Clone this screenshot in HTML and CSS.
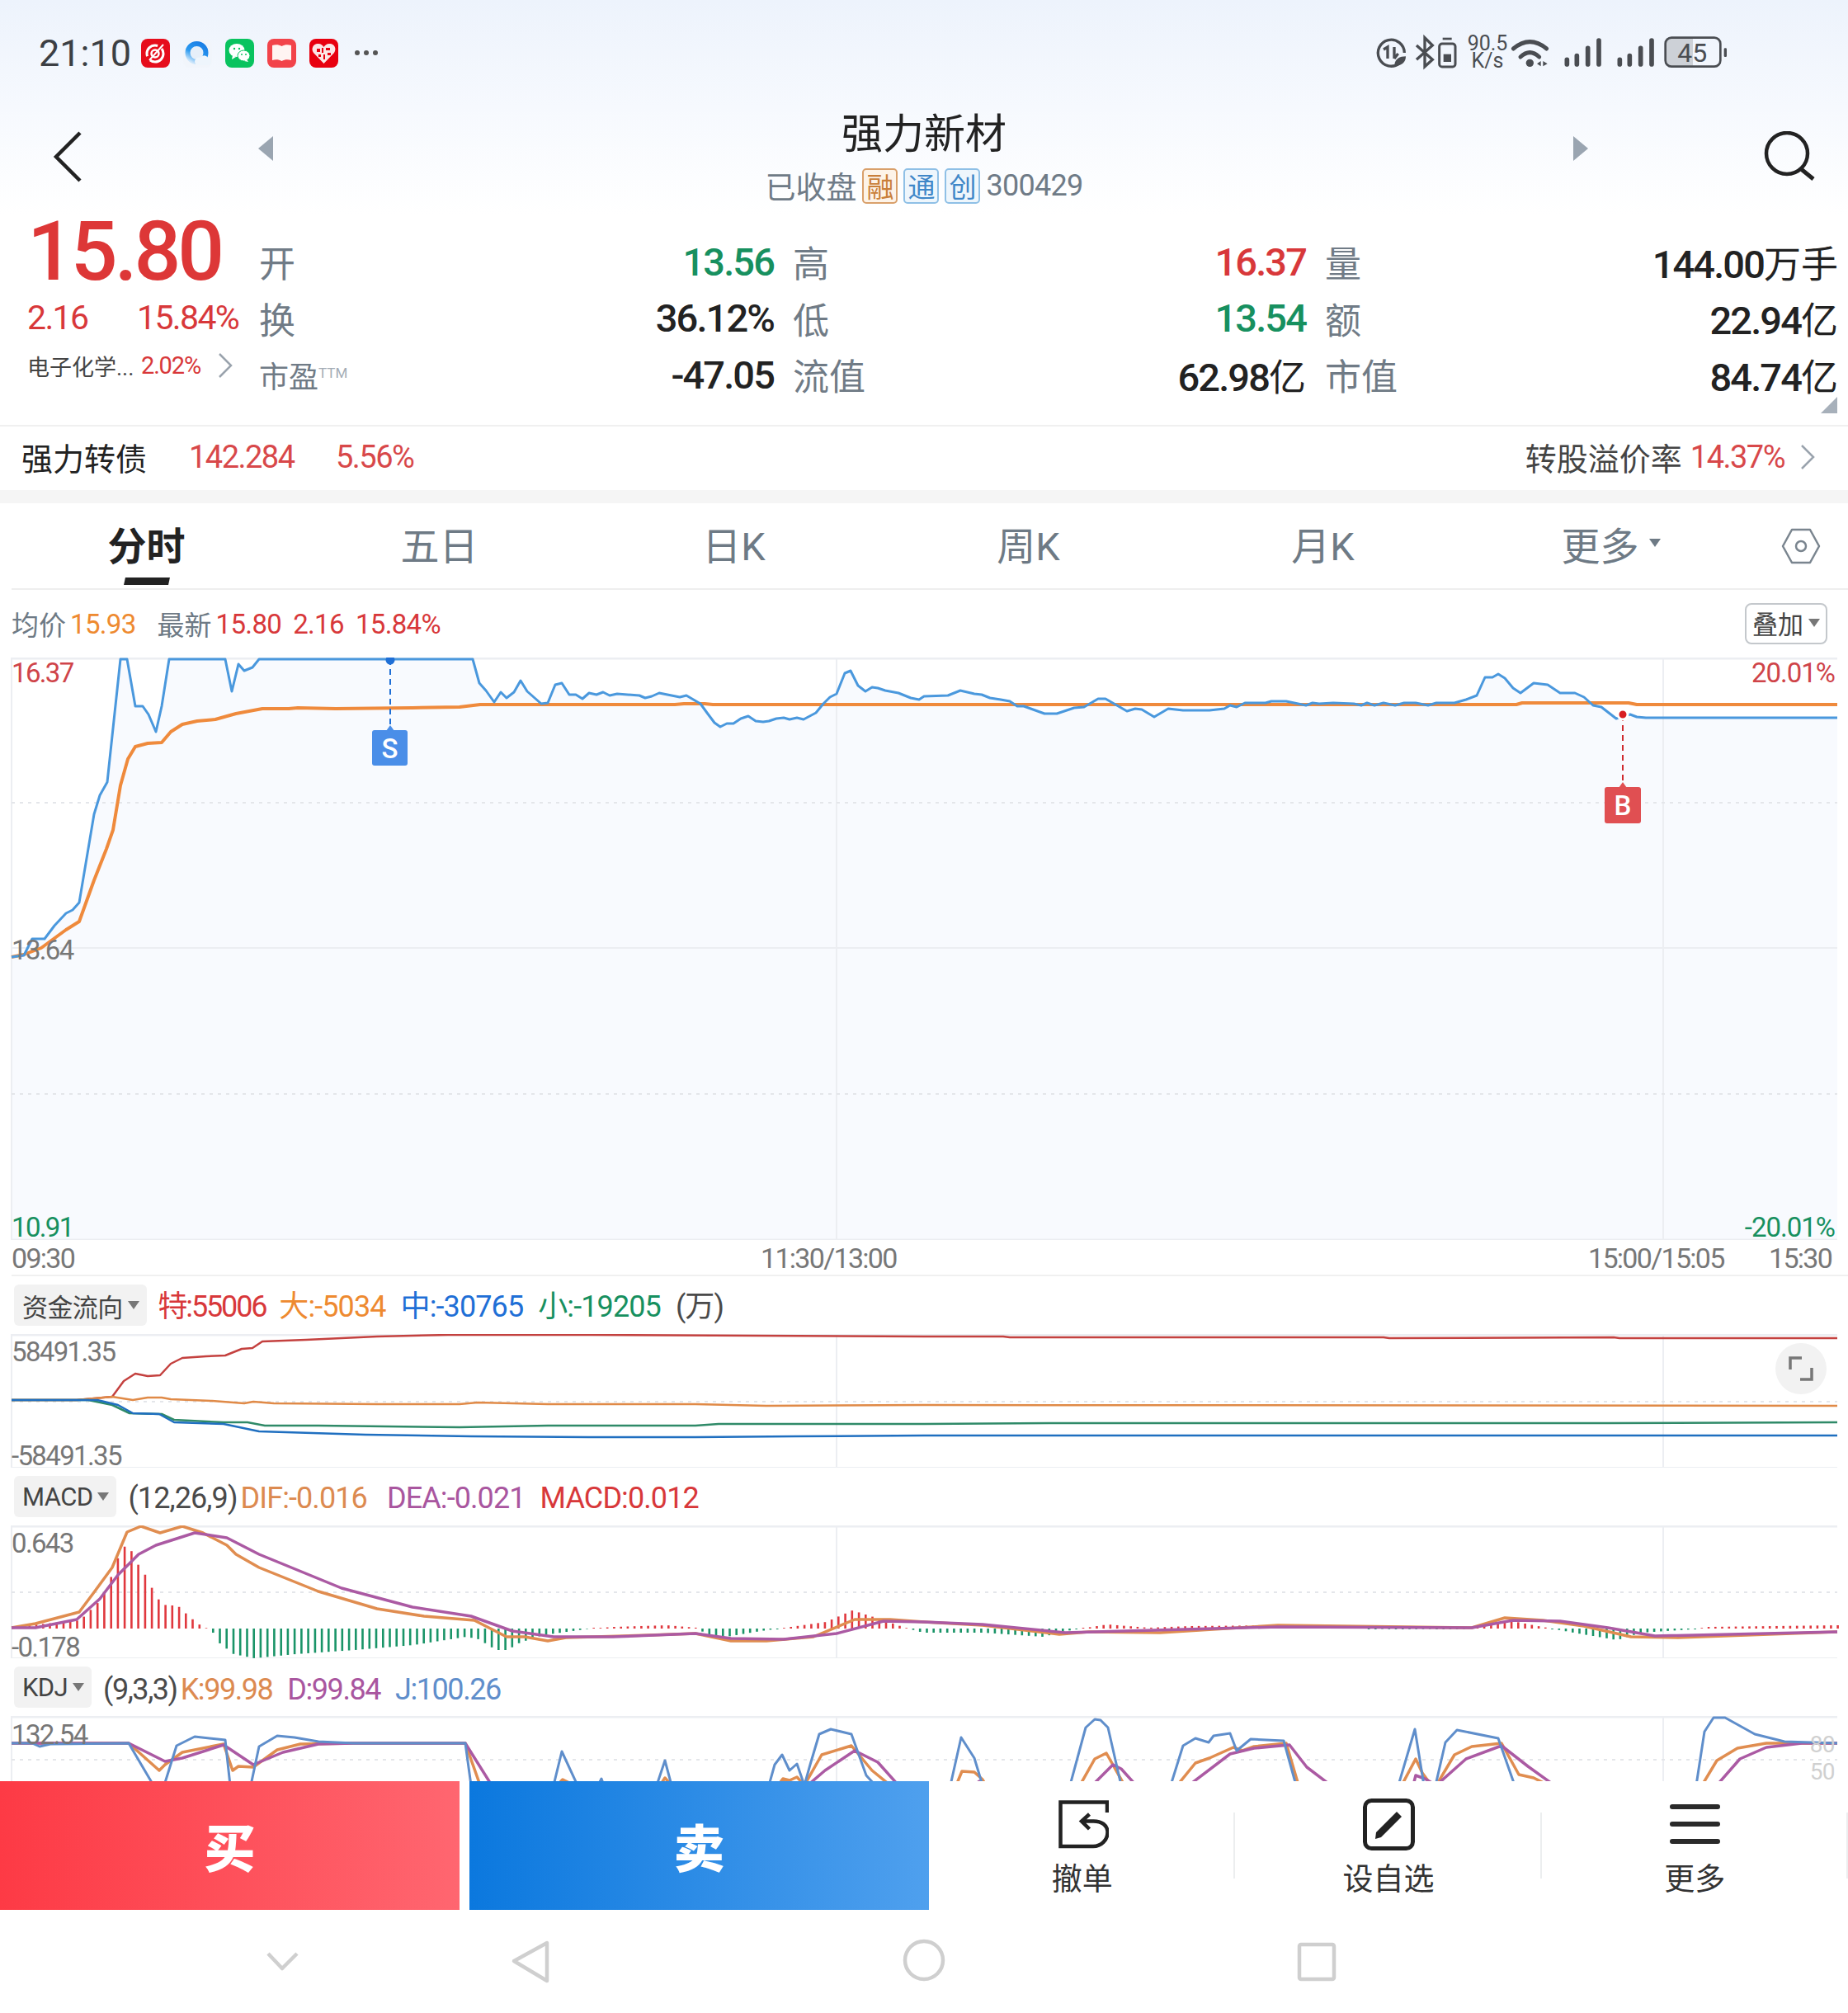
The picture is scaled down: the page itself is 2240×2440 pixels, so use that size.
FILE: index.html
```html
<!DOCTYPE html>
<html>
<head>
	<meta charset="utf-8">
	<title>强力新材</title>
	<link rel="stylesheet" href="styles.css">
</head>
<body>
<div class="screen">
	<div class="top">
		<div class="statusbar">
			<span class="clock">21:10</span>
			<div class="apps">
				<svg class="app" viewBox="0 0 35 35"><rect width="35" height="35" rx="8" fill="#e60d1c"/><circle cx="17" cy="18" r="10" fill="none" stroke="#fff" stroke-width="3" stroke-dasharray="22 6"/><circle cx="17" cy="18" r="4.5" fill="none" stroke="#fff" stroke-width="2.5"/><path d="M10 26L27 7" stroke="#fff" stroke-width="2"/></svg>
				<svg class="app" viewBox="0 0 35 35"><defs><linearGradient id="ring" x1="0.8" y1="0" x2="0.2" y2="1"><stop offset="0" stop-color="#1a7fe6"/><stop offset="0.6" stop-color="#2b9af0"/><stop offset="1" stop-color="#cde6fb"/></linearGradient></defs><rect width="35" height="35" rx="8" fill="#f1f5fb"/><circle cx="16.500" cy="17" r="11" fill="#e6eff9" stroke="url(#ring)" stroke-width="6"/><path d="M17 32H29A4.500 4.500 0 0 0 30 23A5 5 0 0 0 21 23A4.500 4.500 0 0 0 17 32Z" fill="#eef5fc"/></svg>
				<svg class="app" viewBox="0 0 35 35"><rect width="35" height="35" rx="8" fill="#09c35f"/><ellipse cx="14" cy="14" rx="9.5" ry="8" fill="#fff"/><path d="M9 20l-1 5 5-3z" fill="#fff"/><ellipse cx="22.500" cy="20.500" rx="7.500" ry="6.500" fill="#fff" stroke="#09c35f"/><path d="M26 25l2 3-5-1z" fill="#fff"/><circle cx="11" cy="12" r="1.200" fill="#09c35f"/><circle cx="17" cy="12" r="1.200" fill="#09c35f"/><circle cx="20" cy="19" r="1" fill="#09c35f"/><circle cx="25" cy="19" r="1" fill="#09c35f"/></svg>
				<svg class="app" viewBox="0 0 35 35"><rect width="35" height="35" rx="8" fill="#f2434a"/><path d="M6 8c4-1 8-1 11.500 1C21 7 25 7 29 8v18c-4-1-8-1-11.500 1C14 25 10 25 6 26z" fill="#fff4f2"/></svg>
				<svg class="app" viewBox="0 0 35 35"><rect width="35" height="35" rx="8" fill="#e8000f"/><path d="M17.500 30L5 17C1 11 6 5 11 6c3 0 5 2 6.500 4C19 8 21 6 24 6c5-1 10 5 6 11z" fill="#fbe6e6"/><path d="M9 12h4v4H9zM15 11h2v6h-2zM20 11h5v3h-5zM11 19h3v3h-3zM17 19h2v6h-2zM22 17h4v3h-4z" fill="#e8000f"/></svg>
				<svg class="more-dots" viewBox="0 0 30 8"><circle cx="4" cy="4" r="3" fill="#555"/><circle cx="15" cy="4" r="3" fill="#555"/><circle cx="26" cy="4" r="3" fill="#555"/></svg>
			</div>
			<div class="sys-wrap">
				<svg class="sys-icons" viewBox="0 0 1350 210">
					<g fill="none" stroke="#4a4d52" stroke-width="10">
						<path d="M118 143A48 48 0 1 1 136 105"/>
						<path d="M60 93L75 84V126M99 84V126M99 126L113 108"/>
					</g>
					<path d="M100 152C100 126 120 118 141 118C141 140 125 154 100 152Z" fill="#4a4d52"/>
					<path d="M180 78L238 130L210 155V50L238 78L180 130" fill="none" stroke="#4a4d52" stroke-width="10"/>
					<rect x="263" y="72" width="58" height="84" rx="10" fill="none" stroke="#4a4d52" stroke-width="9"/>
					<path d="M275 54H308" stroke="#4a4d52" stroke-width="8"/>
					<rect x="278" y="110" width="28" height="28" fill="#4a4d52"/>
					<g fill="none" stroke="#4a4d52" stroke-width="15" stroke-linecap="round">
						<path d="M532 90Q592 40 653 90"/>
						<path d="M558 120Q592 88 626 120"/>
					</g>
					<circle cx="592" cy="142" r="14" fill="#4a4d52"/>
					<path d="M618 145L632 135V154ZM640 135L656 145L640 154Z" fill="#4a4d52"/>
					<g stroke="#4a4d52" stroke-width="17" stroke-linecap="round">
						<path d="M727 130V147M763 116V147M803 88V147M843 60V147"/>
						<path d="M919 130V147M955 116V147M995 88V147M1035 60V147"/>
					</g>
					<path d="M1104 54H1185V152H1104A16 16 0 0 1 1088 136V70A16 16 0 0 1 1104 54Z" fill="#cdd1d7"/>
					<rect x="1085" y="50" width="200" height="105" rx="22" fill="none" stroke="#4a4d52" stroke-width="8"/>
					<text class="sys-batt" x="1183" y="137">45</text>
					<rect x="1298" y="88" width="10" height="32" rx="4" fill="#4a4d52"/>
				</svg>
				<div class="sys-net"><div>90.5</div><div>K/s</div></div>
			</div>
		</div>

		<div class="header">
			<div class="header-side">
				<svg class="back-icon" viewBox="0 0 40 64"><path d="M35 3L6 32L35 61" fill="none" stroke="#222" stroke-width="4.500"/></svg>
				<span class="arrow arrow-left"></span>
			</div>
			<div class="header-title">
				<div class="stock-name">强力新材</div>
				<div class="stock-sub">
					<span>已收盘</span>
					<span class="tag tag-orange">融</span>
					<span class="tag tag-blue">通</span>
					<span class="tag tag-blue">创</span>
					<span class="stock-code">300429</span>
				</div>
			</div>
			<div class="header-side header-right">
				<span class="arrow arrow-right"></span>
				<svg class="search-icon" viewBox="0 0 64 60"><circle cx="28" cy="27" r="25" fill="none" stroke="#222" stroke-width="4.500"/><path d="M44 45L60 58" stroke="#222" stroke-width="5"/></svg>
			</div>
		</div>

		<div class="quote">
			<div class="quote-left">
				<div class="price">15.80</div>
				<div class="change"><span class="change-abs">2.16</span><span>15.84%</span></div>
				<div class="sector">
					<span class="sector-name">电子化学...</span>
					<span class="sector-pct">2.02%</span>
					<svg class="chevron" viewBox="0 0 18 32"><path d="M2 2L16 16L2 30" fill="none" stroke="#9aa3ad" stroke-width="2.500"/></svg>
				</div>
			</div>
			<div class="cell"><span class="cell-label">开</span><span class="cell-value green">13.56</span></div>
			<div class="cell"><span class="cell-label">高</span><span class="cell-value red">16.37</span></div>
			<div class="cell"><span class="cell-label">量</span><span class="cell-value">144.00<span class="unit">万手</span></span></div>
			<div class="cell"><span class="cell-label">换</span><span class="cell-value">36.12%</span></div>
			<div class="cell"><span class="cell-label">低</span><span class="cell-value green">13.54</span></div>
			<div class="cell"><span class="cell-label">额</span><span class="cell-value">22.94<span class="unit">亿</span></span></div>
			<div class="cell"><span class="cell-label cell-label-small">市盈<sup>TTM</sup></span><span class="cell-value">-47.05</span></div>
			<div class="cell"><span class="cell-label">流值</span><span class="cell-value">62.98<span class="unit">亿</span></span></div>
			<div class="cell"><span class="cell-label">市值</span><span class="cell-value">84.74<span class="unit">亿</span></span></div>
			<span class="corner"></span>
		</div>
	</div>

	<div class="bond">
		<span class="bond-name">强力转债</span>
		<span class="bond-num bond-price">142.284</span>
		<span class="bond-num bond-pct">5.56%</span>
		<span class="bond-right">转股溢价率</span>
		<span class="bond-num bond-premium">14.37%</span>
		<svg class="chevron chevron-bond" viewBox="0 0 18 32"><path d="M2 2L16 16L2 30" fill="none" stroke="#9aa3ad" stroke-width="2.500"/></svg>
	</div>
	<div class="band"></div>

	<div class="tabs">
		<div class="tab tab-active">分时</div>
		<div class="tab">五日</div>
		<div class="tab">日K</div>
		<div class="tab">周K</div>
		<div class="tab">月K</div>
		<div class="tab tab-more">更多<span class="caret caret-tab"></span></div>
		<svg class="settings-icon" viewBox="0 0 48 44"><path d="M13 2H35L46 22L35 42H13L2 22Z" fill="none" stroke="#7a858f" stroke-width="2.500" stroke-linejoin="round"/><circle cx="24" cy="22" r="6" fill="none" stroke="#7a858f" stroke-width="2.500"/></svg>
	</div>

	<div class="legend">
		<span class="legend-key">均价</span><span class="legend-num orange">15.93</span>
		<span class="legend-key legend-gap">最新</span><span class="legend-num red">15.80</span>
		<span class="legend-num red legend-num-gap">2.16</span>
		<span class="legend-num red legend-num-gap">15.84%</span>
		<span class="overlay-btn">叠加<span class="caret"></span></span>
	</div>

	<div class="plot plot-main">
		<svg id="plot-main" class="plot-svg" viewBox="0 797 2240 706">
			<g id="main-lines"></g>
			<path d="M473 799V885" stroke="#1f6fd6" stroke-width="2" stroke-dasharray="7 5"/>
			<circle cx="473" cy="800" r="5.500" fill="#1f6fd6"/>
			<path d="M473 879L478 886H468Z" fill="#4a8ee8"/>
			<rect x="451" y="885" width="43" height="43" rx="3" fill="#4a8ee8"/>
			<text class="marker-text" x="472.500" y="919">S</text>
			<path d="M1967 867V954" stroke="#cf2a2e" stroke-width="2" stroke-dasharray="7 5"/>
			<circle cx="1967" cy="866" r="6" fill="#d81e22" stroke="#fff" stroke-width="3"/>
			<path d="M1967 948L1972 955H1962Z" fill="#e04f52"/>
			<rect x="1945" y="954" width="44" height="44" rx="3" fill="#e04f52"/>
			<text class="marker-text" x="1967" y="988">B</text>
		</svg>
		<span class="lbl lbl-left lbl-top lbl-red">16.37</span>
		<span class="lbl lbl-left lbl-mid">13.64</span>
		<span class="lbl lbl-left lbl-bot lbl-green">10.91</span>
		<span class="lbl lbl-right lbl-top lbl-red">20.01%</span>
		<span class="lbl lbl-right lbl-bot lbl-green">-20.01%</span>
	</div>

	<div class="time-axis">
		<span class="time-item time-open">09:30</span>
		<span class="time-item time-noon">11:30/13:00</span>
		<span class="time-item time-close">15:00/15:05</span>
		<span class="time-item time-after">15:30</span>
	</div>

	<div class="ind-row ind-row-flow">
		<span class="chip">资金流向<span class="caret"></span></span>
		<span class="ind ind-first ind-special red">特:55006</span>
		<span class="ind orange">大:-5034</span>
		<span class="ind blue">中:-30765</span>
		<span class="ind green">小:-19205</span>
		<span class="ind ind-muted">(万)</span>
	</div>
	<div class="plot plot-flow">
		<svg id="plot-flow" class="plot-svg" viewBox="0 1617 2240 162"></svg>
		<span class="lbl lbl-left lbl-top">58491.35</span>
		<span class="lbl lbl-left lbl-bot">-58491.35</span>
		<svg class="expand-icon" viewBox="0 0 62 62"><circle cx="31" cy="31" r="31" fill="#f2f2f2"/><path d="M18 32V18H32M44 30V44H30" fill="none" stroke="#777" stroke-width="3.500"/></svg>
	</div>

	<div class="ind-row ind-row-macd">
		<span class="chip">MACD<span class="caret"></span></span>
		<span class="ind ind-first ind-muted">(12,26,9)</span>
		<span class="ind ind-tight dif">DIF:-0.016</span>
		<span class="ind purple">DEA:-0.021</span>
		<span class="ind red">MACD:0.012</span>
	</div>
	<div class="plot plot-macd">
		<svg id="plot-macd" class="plot-svg" viewBox="0 1850 2240 161"></svg>
		<span class="lbl lbl-left lbl-top">0.643</span>
		<span class="lbl lbl-left lbl-bot">-0.178</span>
	</div>

	<div class="ind-row ind-row-kdj">
		<span class="chip">KDJ<span class="caret"></span></span>
		<span class="ind ind-first ind-muted">(9,3,3)</span>
		<span class="ind ind-tight dif">K:99.98</span>
		<span class="ind purple">D:99.84</span>
		<span class="ind kdj-j">J:100.26</span>
	</div>
	<div class="plot plot-kdj">
		<svg id="plot-kdj" class="plot-svg" viewBox="0 2081 2240 79"></svg>
		<span class="lbl lbl-left lbl-top">132.54</span>
		<span class="lbl lbl-right lbl-80">80</span>
		<span class="lbl lbl-right lbl-50">50</span>
	</div>

	<div class="actions">
		<div class="trade buy">买</div>
		<div class="trade sell">卖</div>
		<div class="action">
			<svg class="action-icon" viewBox="0 0 64 64"><path d="M62 18V5.500H5.500V59H45C55 59 62.500 51 62.500 42C62.500 33 55 28.500 45.500 28.500H31M40.500 20L31 28.500L40.500 38" fill="none" stroke="#222" stroke-width="4.500"/></svg>
			<span>撤单</span>
		</div>
		<div class="action">
			<svg class="action-icon" viewBox="0 0 64 64"><rect x="3.500" y="3.500" width="58" height="58" rx="8" fill="none" stroke="#222" stroke-width="5"/><path d="M17 42L42 17L48 23L23 48L16 50Z" fill="#222"/></svg>
			<span>设自选</span>
		</div>
		<div class="action">
			<svg class="action-icon" viewBox="0 0 64 64"><path d="M5 11H60M5 32H60M5 53H60" stroke="#2a2a2a" stroke-width="6" stroke-linecap="round"/></svg>
			<span>更多</span>
		</div>
	</div>

	<svg class="navbar" viewBox="0 2316 2240 124">
		<g fill="none" stroke="#cfcfcf" stroke-width="4.500" stroke-linejoin="round">
			<path d="M325 2369L342 2387L360 2369"/>
			<path d="M663 2356V2402L623 2378Z"/>
			<circle cx="1120" cy="2377" r="23"/>
			<rect x="1575" y="2358" width="42" height="42" rx="2"/>
		</g>
	</svg>
</div>
<script src="chart.js"></script>
</body>
</html>
```

FILE: styles.css
```css
* {
	box-sizing: border-box;
}
body {
	margin: 0;
	background-color: #fff;
	font-family: Roboto, "Noto Sans CJK SC", sans-serif;
	color: #222;
}
.screen {
	width: 2240px;
	height: 2440px;
	overflow: hidden;
	background-color: #fff;
}
.red { color: #d8383a; }
.green { color: #17905f; }
.orange { color: #ee8a30; }
.blue { color: #1f6fd6; }
.purple { color: #a9569f; }
.dif { color: #dc8a50; }
.kdj-j { color: #5f8ecb; }

/* top block with the pale gradient */
.top {
	position: relative;
	height: 515px;
	background: linear-gradient(#edf3fc 0, #f6f9fe 130px, #fff 260px);
}
.statusbar {
	display: flex;
	align-items: center;
	height: 128px;
	padding-left: 47px;
	padding-right: 133px;
}
.clock {
	width: 124px;
	font-size: 45px;
	color: #3c3f44;
}
.apps {
	display: flex;
	align-items: center;
	gap: 16px;
}
.app {
	width: 35px;
	height: 35px;
}
.more-dots {
	width: 30px;
	height: 8px;
	margin-left: 3px;
}
.sys-wrap {
	position: relative;
	margin-left: auto;
}
.sys-icons {
	display: block;
	width: 450px;
	height: 70px;
}
.sys-net {
	position: absolute;
	left: 119px;
	top: 13px;
	width: 54px;
	font-size: 25px;
	line-height: 21px;
	text-align: center;
	color: #4a4d52;
}
.sys-batt {
	font-size: 96px;
	text-anchor: middle;
	fill: #4a4d52;
}

.header {
	display: grid;
	grid-template-columns: 1fr auto 1fr;
	height: 134px;
}
.header-side {
	display: flex;
	align-items: flex-start;
	padding-left: 62px;
}
.header-right {
	justify-content: flex-end;
	padding-left: 0;
	padding-right: 38px;
}
.back-icon {
	width: 40px;
	height: 64px;
	margin-top: 30px;
}
.arrow {
	width: 0;
	height: 0;
	margin-top: 37px;
	border-top: 15px solid transparent;
	border-bottom: 15px solid transparent;
}
.arrow-left {
	margin-left: 211px;
	border-right: 18px solid #9aa5b1;
}
.arrow-right {
	margin-right: 213px;
	border-left: 18px solid #9aa5b1;
}
.search-icon {
	width: 64px;
	height: 60px;
	margin-top: 31px;
}
.header-title {
	display: flex;
	flex-direction: column;
	align-items: center;
}
.stock-name {
	height: 70px;
	font-size: 50px;
	line-height: 70px;
	color: #222;
}
.stock-sub {
	display: flex;
	align-items: center;
	gap: 7px;
	height: 50px;
	margin-top: 2px;
	font-size: 37px;
	color: #6f7b87;
}
.tag {
	display: flex;
	align-items: center;
	justify-content: center;
	width: 43px;
	height: 43px;
	border-radius: 5px;
	font-size: 33px;
}
.tag-orange {
	border: 2px solid #d9a06b;
	background-color: #fdf3e8;
	color: #c97f3a;
}
.tag-blue {
	border: 2px solid #8fc0e6;
	background-color: #eef6fc;
	color: #3f87c8;
}
.stock-code {
	font-size: 36px;
	letter-spacing: -0.02em;
}

.quote {
	position: relative;
	display: grid;
	grid-template-columns: 258px 624px 622px 622px;
	grid-auto-rows: 68.5px;
	column-gap: 23px;
	padding: 21px 0 0 33px;
}
.quote-left {
	grid-row: 1 / 4;
	margin-top: -28px;
	margin-right: -23px;
}
.price {
	height: 100px;
	font-size: 100px;
	font-weight: 500;
	line-height: 100px;
	letter-spacing: -0.04em;
	color: #dd3737;
}
.change {
	display: flex;
	height: 66px;
	margin-top: -3px;
	font-size: 41px;
	line-height: 66px;
	letter-spacing: -0.04em;
	color: #d8383a;
}
.change-abs {
	width: 133px;
}
.sector {
	display: flex;
	align-items: center;
	height: 46px;
	margin-top: 2px;
	font-size: 27px;
	color: #444;
}
.sector-name {
	width: 138px;
	white-space: nowrap;
}
.sector-pct {
	width: 93px;
	font-size: 29px;
	letter-spacing: -0.04em;
	color: #d8383a;
}
.chevron {
	width: 18px;
	height: 32px;
}
.cell {
	display: flex;
	align-items: center;
	justify-content: space-between;
}
.cell-label {
	font-size: 44px;
	color: #707b86;
}
.cell-label-small {
	font-size: 36px;
}
.cell-label sup {
	position: relative;
	top: -12px;
	margin-left: 0;
	font-size: 17px;
	line-height: 0;
	vertical-align: baseline;
	color: #a3acb5;
}
.cell-value {
	font-size: 47px;
	font-weight: 500;
	letter-spacing: -0.04em;
}
.unit {
	font-size: 45px;
	font-weight: 400;
	letter-spacing: 0;
}
.corner {
	position: absolute;
	right: 13px;
	bottom: -12px;
	border-left: 20px solid transparent;
	border-bottom: 20px solid #a7b0ba;
}

.bond {
	display: flex;
	align-items: center;
	height: 79px;
	padding-left: 26px;
	padding-bottom: 4px;
	border-top: 2px solid #f0f0f0;
}
.bond-name {
	width: 203px;
	font-size: 38px;
	color: #222;
}
.bond-num {
	font-size: 38px;
	letter-spacing: -0.04em;
	color: #d8484a;
}
.bond-price {
	width: 178px;
}
.bond-right {
	margin-left: auto;
	font-size: 38px;
	color: #444;
}
.bond-premium {
	margin-left: 10px;
}
.chevron-bond {
	margin-left: 19px;
	margin-right: 40px;
}
.band {
	height: 16px;
	background-color: #f5f5f5;
}

.tabs {
	position: relative;
	display: grid;
	grid-template-columns: repeat(6, 357px);
	align-items: center;
	height: 105px;
	padding-bottom: 9px;
}
.tabs::after {
	content: "";
	position: absolute;
	left: 14px;
	right: 0;
	bottom: 0;
	height: 2px;
	background-color: #eee;
}
.tab {
	position: relative;
	left: -3px;
	display: flex;
	align-items: center;
	justify-content: center;
	font-size: 47px;
	color: #6e7a85;
}
.tab-active {
	left: -1px;
	font-weight: 700;
	color: #222;
}
.tab-active::after {
	content: "";
	position: absolute;
	left: 152px;
	top: 76px;
	width: 54px;
	height: 9px;
	background-color: #222;
	transform: skewX(-12deg);
}
.tab-more {
	left: -11px;
}
.settings-icon {
	position: absolute;
	left: 2159px;
	top: 30px;
	width: 48px;
	height: 44px;
}
.caret {
	display: inline-block;
	margin-left: 6px;
	border-left: 7px solid transparent;
	border-right: 7px solid transparent;
	border-top: 10px solid #777;
}
.caret-tab {
	margin-left: 12px;
	border-top-color: #6e7a85;
}

.legend {
	display: flex;
	align-items: center;
	height: 82px;
	padding-left: 14px;
	padding-right: 25px;
	font-size: 33px;
}
.legend-key {
	color: #6e7a85;
}
.legend-num {
	margin-left: 5px;
	letter-spacing: -0.02em;
}
.legend-gap {
	margin-left: 26px;
}
.legend-num-gap {
	margin-left: 14px;
}
.overlay-btn {
	display: flex;
	align-items: center;
	justify-content: center;
	width: 100px;
	height: 50px;
	margin-left: auto;
	padding-bottom: 3px;
	border: 2px solid #c4c8cc;
	border-radius: 8px;
	font-size: 31px;
	color: #444;
}

.plot {
	position: relative;
}
.plot-svg {
	position: absolute;
	left: 0;
	top: 0;
	display: block;
	width: 2240px;
	height: 100%;
}
.plot-main { height: 706px; }
.plot-flow { height: 162px; }
.plot-macd { height: 161px; }
.plot-kdj { height: 79px; }
.lbl {
	position: absolute;
	font-size: 33px;
	line-height: 40px;
	letter-spacing: -0.05em;
	color: #777;
}
.lbl-red { color: #cf4449; }
.lbl-green { color: #17905f; }
.lbl-left { left: 14px; }
.lbl-right {
	right: 16px;
	letter-spacing: -0.03em;
}
.plot-main .lbl-top { top: -1px; }
.plot-main .lbl-mid { top: 335px; }
.plot-main .lbl-bot { top: 671px; }
.plot-flow .lbl-top { top: 2px; }
.plot-flow .lbl-bot { top: 128px; }
.plot-macd .lbl-top { top: 2px; }
.plot-macd .lbl-bot { top: 128px; }
.plot-kdj .lbl-top { top: 3px; }
.lbl-80,
.lbl-50 {
	font-size: 28px;
	line-height: 24px;
	letter-spacing: -0.02em;
	color: #d0d0d0;
}
.lbl-80 { top: 23px; }
.lbl-50 { top: 56px; }
.marker-text {
	font-size: 33px;
	font-weight: 500;
	text-anchor: middle;
	fill: #fff;
}
.expand-icon {
	position: absolute;
	left: 2152px;
	top: 11px;
	width: 62px;
	height: 62px;
}

.time-axis {
	position: relative;
	height: 44px;
	border-bottom: 2px solid #f0f0f0;
	margin-left: 14px;
}
.time-item {
	position: absolute;
	top: 2px;
	font-size: 34px;
	line-height: 40px;
	letter-spacing: -0.05em;
	color: #777;
}
.time-open { left: 0; }
.time-noon { left: 908px; }
.time-close { left: 1911px; }
.time-after { left: 2130px; }

.ind-row {
	display: flex;
	align-items: center;
	height: 70px;
	padding-left: 17px;
	font-size: 36px;
	letter-spacing: -0.025em;
}
.ind-row-flow .ind { margin-bottom: 5px; }
.ind-row-macd .ind { margin-top: 3px; }
.ind-row-kdj .ind {
	margin-top: 6px;
	letter-spacing: -0.04em;
}
.ind-row-macd .purple { margin-left: 24px; }
.chip {
	display: flex;
	align-items: center;
	height: 50px;
	padding: 0 9px 0 10px;
	border-radius: 6px;
	background-color: #f2f2f2;
	font-size: 31px;
	letter-spacing: -0.02em;
	color: #444;
}
.ind {
	margin-left: 18px;
}
.ind-first {
	margin-left: 14px;
}
.ind-special {
	letter-spacing: -0.06em;
	margin-right: -2px;
}
.ind-tight {
	margin-left: 4px;
}
.ind-muted {
	color: #4a4a4a;
}

.actions {
	display: flex;
	height: 156px;
	background-color: #fff;
}
.trade {
	display: flex;
	align-items: center;
	justify-content: center;
	width: 557px;
	font-size: 62px;
	font-weight: 900;
	color: #fff;
}
.buy {
	background: linear-gradient(90deg, #fd3a45, #ff6670);
}
.sell {
	margin-left: 12px;
	background: linear-gradient(90deg, #0b78de, #4fa0ee);
}
.action {
	position: relative;
	display: flex;
	flex-direction: column;
	align-items: center;
	flex: 1;
	padding-top: 20px;
	font-size: 37px;
	line-height: 50px;
	color: #333;
}
.action::after {
	content: "";
	position: absolute;
	right: 0;
	top: 38px;
	width: 2px;
	height: 80px;
	background-color: #eceeef;
}
.action-icon {
	width: 64px;
	height: 64px;
	margin-bottom: 11px;
}
.navbar {
	display: block;
	width: 2240px;
	height: 124px;
}
```

FILE: chart.js
```js
// all points are in page pixels, the svg viewBoxes use the same coordinates
var SVGNS = "http://www.w3.org/2000/svg";
var LEFT = 14, RIGHT = 2227;
var GRID = "#eceef2";

function add(parent, tag, attrs) {
	var el = document.createElementNS(SVGNS, tag);
	for (var k in attrs) el.setAttribute(k, attrs[k]);
	parent.appendChild(el);
	return el;
}
function toPoints(list) {
	var out = [];
	for (var i = 0; i < list.length; i += 2) out.push(list[i] + "," + list[i + 1]);
	return out.join(" ");
}
function line(parent, list, color, width) {
	add(parent, "polyline", { points: toPoints(list), fill: "none", stroke: color, "stroke-width": width, "stroke-linejoin": "round" });
}
function grid(parent, top, bottom, rows) {
	add(parent, "path", { d: "M" + LEFT + " " + top + "V" + bottom + "M1014 " + top + "V" + bottom + "M2016 " + top + "V" + bottom, stroke: GRID, "stroke-width": 2, fill: "none" });
	for (var i = 0; i < rows.length; i++) {
		var r = rows[i];
		var attrs = { d: "M" + LEFT + " " + r.y + "H" + RIGHT, stroke: r.dash ? "#e4e6ea" : GRID, "stroke-width": r.w || 2 };
		if (r.dash) attrs["stroke-dasharray"] = "4 6";
		add(parent, "path", attrs);
	}
}

// main price chart
var priceLine = [14,1160,29,1158,39,1138,54,1138,66,1122,80,1107,88,1103,96,1094,114,987,121,964,130,948,146,799,154,799,164,856,173,856,180,866,189,887,196,856,205,799,273,799,281,838,289,805,296,813,306,809,314,799,573,799,581,828,589,837,599,851,607,839,614,846,623,839,631,825,639,838,656,853,664,852,673,830,681,828,690,842,698,842,706,847,714,840,723,842,731,839,739,843,748,841,775,843,782,846,790,844,799,840,814,843,824,845,832,843,849,853,857,864,866,876,873,881,881,877,889,877,898,871,907,868,916,874,925,875,932,874,941,871,950,870,957,872,966,870,974,872,989,864,998,853,1006,845,1014,841,1024,816,1031,813,1040,831,1049,838,1057,833,1064,834,1073,837,1089,840,1104,846,1114,848,1120,844,1149,843,1164,837,1181,841,1190,842,1200,846,1213,848,1224,850,1233,856,1241,856,1266,865,1281,865,1302,858,1314,857,1331,847,1340,847,1366,862,1376,859,1384,860,1399,869,1416,859,1434,861,1466,861,1484,859,1491,855,1499,857,1509,852,1534,852,1541,850,1559,850,1583,855,1591,852,1599,853,1616,852,1641,853,1650,855,1657,852,1666,855,1677,852,1691,855,1702,852,1716,852,1731,855,1741,852,1763,852,1777,848,1790,843,1800,821,1809,821,1816,817,1824,822,1834,834,1843,840,1859,828,1876,830,1891,840,1909,840,1920,845,1931,855,1941,857,1959,871,1976,866,1984,869,1995,870,2227,870];
var avgLine = [14,1160,29,1157,50,1149,80,1127,96,1117,114,1067,129,1029,137,1006,146,952,155,920,164,905,179,901,196,900,207,887,221,878,239,874,261,872,286,865,318,859,350,859,361,858,407,859,500,858,557,857,582,854,818,854,829,853,854,853,864,854,1838,854,1845,852,1974,852,1984,854,2227,854];

var main = document.getElementById("main-lines");
add(main, "polygon", { points: toPoints(priceLine) + " 2227,1503 14,1503", fill: "#f8fafe" });
grid(main, 797, 1503, [{ y: 798, w: 3 }, { y: 973, dash: 1 }, { y: 1149 }, { y: 1326, dash: 1 }, { y: 1503, w: 3 }]);
line(main, avgLine, "#ef8a3c", 4);
line(main, priceLine, "#4a98dd", 3);

// fund flow
var flow = document.getElementById("plot-flow");
grid(flow, 1617, 1779, [{ y: 1618, w: 3 }, { y: 1699, dash: 1 }, { y: 1779 }]);
line(flow, [14,1697,93,1697,114,1695,136,1693,150,1674,164,1665,179,1668,194,1667,207,1653,221,1646,250,1644,273,1643,293,1635,306,1634,318,1626,371,1624,457,1620,543,1618,714,1618,1120,1620,1216,1620,1224,1621,1677,1621,1684,1622,1956,1621,1963,1622,2227,1622], "#c4413f", 2.5);
line(flow, [14,1697,93,1697,136,1693,161,1697,179,1694,196,1694,207,1696,257,1698,296,1701,307,1699,332,1701,457,1702,557,1702,579,1700,664,1702,843,1702,929,1704,1120,1703,2227,1704], "#e08a47", 2.5);
line(flow, [14,1697,107,1697,136,1703,157,1713,196,1714,211,1721,271,1724,300,1724,321,1728,386,1728,557,1730,664,1728,843,1728,871,1726,1120,1726,1291,1725,1949,1725,2227,1724], "#2f8a68", 2.5);
line(flow, [14,1697,118,1697,143,1703,161,1713,193,1714,211,1724,271,1726,314,1735,443,1739,571,1741,714,1742,843,1742,964,1741,1120,1740,2227,1740], "#1f6fc0", 2.5);

// macd, bar heights interpolated between sampled values (x, height, up is positive)
var barKeys = [14,2,96,10,123,37,136,69,146,98,155,101,164,80,171,72,180,55,189,37,200,28,214,28,221,21,236,8,246,1,254,0,264,-17,282,-31,307,-36,357,-31,429,-26,500,-20,564,-10,579,-13,600,-26,614,-26,629,-17,657,-8,707,-1,714,0,743,2,807,4,843,1,857,-8,879,-10,921,-3,950,1,1000,8,1032,22,1064,12,1093,2,1114,-4,1120,-5,1191,-5,1263,-10,1291,-3,1341,5,1391,1,1441,3,1549,4,1620,1,1691,-1,1777,0,1827,10,1863,3,1906,-5,1959,-14,1988,-5,2049,-1,2070,2,2227,4];
function barHeight(x) {
	for (var i = 0; i < barKeys.length - 2; i += 2) {
		if (x <= barKeys[i + 2]) {
			var t = (x - barKeys[i]) / (barKeys[i + 2] - barKeys[i]);
			return barKeys[i + 1] + (barKeys[i + 3] - barKeys[i + 1]) * t;
		}
	}
	return 0;
}
var macd = document.getElementById("plot-macd");
grid(macd, 1850, 2011, [{ y: 1851, w: 3 }, { y: 1931, dash: 1 }, { y: 2011 }]);
var BASE = 1975;
for (var x = 18; x < 2227; x += 8.24) {
	var h = barHeight(x);
	if (Math.abs(h) < 0.5) h = h < 0 ? -1 : 1;
	add(macd, "rect", { x: x.toFixed(1), y: h > 0 ? BASE - h : BASE, width: 2.6, height: Math.abs(h), fill: h > 0 ? "#e0383e" : "#1a9468" });
}
line(macd, [14,1974,43,1969,96,1955,114,1931,136,1901,154,1858,171,1851,194,1859,221,1851,246,1859,275,1874,286,1885,314,1901,386,1930,457,1951,514,1960,575,1965,614,1985,636,1985,664,1990,686,1986,786,1983,843,1981,886,1990,929,1990,986,1985,1036,1964,1079,1964,1120,1967,1191,1971,1284,1982,1320,1979,1406,1980,1549,1971,1784,1974,1824,1962,1870,1965,1920,1972,1977,1985,2034,1986,2227,1979], "#e08d50", 3.5);
line(macd, [14,1974,43,1974,93,1964,121,1939,143,1910,168,1885,189,1874,236,1859,275,1865,314,1885,414,1926,500,1949,571,1960,621,1978,671,1985,743,1985,843,1981,886,1987,950,1988,1014,1981,1071,1966,1120,1967,1191,1970,1291,1980,1549,1973,1784,1974,1834,1965,1891,1966,1949,1974,2006,1984,2227,1979], "#ab5aa3", 3.5);

// kdj, the lower part runs under the action bar
var kdj = document.getElementById("plot-kdj");
grid(kdj, 2081, 2160, [{ y: 2082, w: 3 }, { y: 2134, dash: 1 }]);
line(kdj, [14,2114,156,2114,193,2147,200,2140,221,2125,271,2115,282,2147,289,2142,307,2143,336,2122,364,2115,429,2114,564,2114,582,2165,675,2165,682,2158,696,2165,800,2165,806,2156,814,2165,943,2165,949,2157,957,2159,966,2155,975,2165,996,2128,1032,2117,1057,2147,1079,2165,1159,2165,1166,2148,1181,2149,1191,2158,1195,2165,1309,2165,1327,2133,1341,2126,1363,2165,1427,2165,1449,2138,1466,2132,1495,2119,1506,2123,1520,2118,1559,2114,1574,2165,1699,2165,1716,2133,1724,2150,1735,2165,1741,2165,1763,2128,1784,2118,1820,2114,1841,2152,1859,2156,1877,2165,2063,2165,2081,2135,2106,2120,2141,2114,2227,2114], "#e08d50", 3.5);
line(kdj, [14,2114,156,2114,200,2136,221,2132,271,2116,307,2140,343,2125,386,2115,429,2114,564,2114,596,2165,979,2165,1000,2147,1036,2123,1064,2137,1089,2165,1181,2165,1187,2160,1195,2165,1324,2165,1349,2140,1359,2145,1377,2165,1441,2165,1491,2127,1520,2120,1563,2116,1584,2143,1613,2165,1713,2165,1716,2153,1727,2157,1741,2165,1777,2133,1820,2117,1852,2142,1884,2165,2081,2165,2109,2133,2141,2119,2184,2114,2227,2114], "#ab5aa3", 3.5);
line(kdj, [14,2114,39,2114,48,2118,61,2115,156,2114,186,2165,199,2165,214,2117,236,2106,273,2110,279,2165,304,2165,314,2118,336,2105,357,2107,386,2112,429,2114,564,2114,571,2165,671,2165,681,2124,700,2165,725,2165,729,2157,732,2165,796,2165,806,2135,814,2165,932,2165,939,2140,948,2128,957,2147,966,2139,975,2165,982,2140,993,2103,1007,2097,1032,2103,1050,2153,1061,2165,1152,2165,1165,2107,1181,2132,1191,2165,1297,2165,1316,2095,1327,2085,1334,2086,1343,2095,1359,2165,1419,2165,1434,2117,1449,2108,1465,2113,1471,2105,1491,2102,1499,2123,1516,2109,1556,2111,1571,2165,1695,2165,1715,2097,1726,2165,1740,2165,1752,2113,1766,2098,1816,2108,1836,2165,2056,2165,2066,2100,2077,2083,2091,2083,2127,2103,2163,2112,2227,2114], "#5f8ecb", 3);
```
